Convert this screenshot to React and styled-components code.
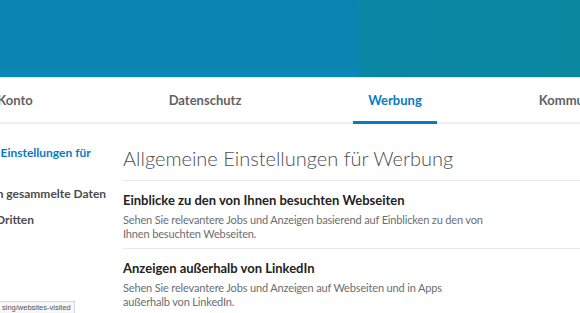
import React from "react"
import styled, { createGlobalStyle } from "styled-components"

const GlobalStyle = createGlobalStyle`
    html, body {
        margin: 0;
        padding: 0;
        background: #fff;
        overflow: hidden;
    }
    body {
        font-family: Lato, "Open Sans", sans-serif;
        width: 580px;
        height: 313px;
    }
`

const Page = styled.div`
    width: 580px;
    height: 313px;
    overflow: hidden;
    position: relative;
`
const Hero = styled.header`
    height: 77px;
    display: flex;
    background: #0a84b2;
    border-bottom: 1px solid #cfe6ee;
`
const HeroLeft = styled.div`
    flex: 0 0 358px;
    background: linear-gradient(180deg, #0a83b0 0%, #0a84b2 85%, #0c89bd 100%);
`
const HeroRight = styled.div`
    flex: 1;
    background: linear-gradient(90deg, #0a86a6 0%, #0a889f 100%);
`
const TabBar = styled.nav`
    display: flex;
    height: 44px;
    margin-left: -80px;
    border-bottom: 2px solid #f0f0f0;
`
const Tab = styled.div`
    flex: 0 0 190px;
    display: flex;
    justify-content: center;
`
const TabLabel = styled.span`
    display: flex;
    align-items: center;
    padding: 0 15px;
    font-size: 13px;
    font-weight: 700;
    color: ${p => (p.$active ? "#0a7bc1" : "#5f6263")};
    border-bottom: 3px solid ${p => (p.$active ? "#0a7bc1" : "transparent")};
    margin-bottom: -2px;
`
const Main = styled.div`
    display: flex;
    margin-left: -120px;
`
const Sidebar = styled.aside`
    flex: 0 0 243px;
    padding: 21px 0 0 58px;
    box-sizing: border-box;
    display: flex;
    flex-direction: column;
    gap: 11px;
`
const SideItem = styled.a`
    max-width: 180px;
    font-size: 12px;
    line-height: 15px;
    font-weight: 700;
    color: ${p => (p.$active ? "#0a7bc1" : "#4a4d4f")};
    text-decoration: none;
`
const Content = styled.section`
    flex: 1;
    padding-top: 20px;
`
const Title = styled.h1`
    margin: 0;
    font-size: 20px;
    line-height: 28px;
    font-weight: 300;
    color: #4b4f52;
    padding-bottom: 8px;
    border-bottom: 1px solid #e6e9ec;
    white-space: nowrap;
`
const Setting = styled.div`
    padding: 10px 0 7px;
    border-bottom: 1px solid ${p => (p.$last ? "transparent" : "#e6e9ec")};
`
const SettingTitle = styled.h2`
    margin: 0 0 4px;
    font-size: 13px;
    line-height: 18px;
    font-weight: 700;
    color: #222;
`
const SettingText = styled.p`
    margin: 0;
    font-size: 11px;
    line-height: 14px;
    letter-spacing: -0.15px;
    color: #6b6e70;
    max-width: ${p => p.$measure}px;
`
const StatusBar = styled.div`
    position: absolute;
    left: -1px;
    bottom: 0;
    height: 11px;
    padding: 0 3px 0 2px;
    background: #f7f7f7;
    border: 1px solid #d6d6d6;
    border-bottom: none;
    font-family: "Liberation Sans", Arial, sans-serif;
    font-size: 7.5px;
    line-height: 11px;
    color: #555;
`

const settings = [
    {
        title: "Einblicke zu den von Ihnen besuchten Webseiten",
        text: "Sehen Sie relevantere Jobs und Anzeigen basierend auf Einblicken zu den von Ihnen besuchten Webseiten.",
        measure: 372,
    },
    {
        title: "Anzeigen außerhalb von LinkedIn",
        text: "Sehen Sie relevantere Jobs und Anzeigen auf Webseiten und in Apps außerhalb von LinkedIn.",
        measure: 340,
    },
]

const App = () => {
    return (
        <Page>
            <GlobalStyle />
            <Hero>
                <HeroLeft />
                <HeroRight />
            </Hero>
            <TabBar>
                <Tab><TabLabel>Konto</TabLabel></Tab>
                <Tab><TabLabel>Datenschutz</TabLabel></Tab>
                <Tab><TabLabel $active>Werbung</TabLabel></Tab>
                <Tab><TabLabel>Kommunikation</TabLabel></Tab>
            </TabBar>
            <Main>
                <Sidebar>
                    <SideItem $active href="#">Allgemeine Einstellungen für Werbung</SideItem>
                    <SideItem href="#">Von Kunden gesammelte Daten</SideItem>
                    <SideItem href="#">Daten von Dritten</SideItem>
                </Sidebar>
                <Content>
                    <Title>Allgemeine Einstellungen für Werbung</Title>
                    {settings.map((s, i) => (
                        <Setting key={s.title} $last={i === settings.length - 1}>
                            <SettingTitle>{s.title}</SettingTitle>
                            <SettingText $measure={s.measure}>{s.text}</SettingText>
                        </Setting>
                    ))}
                </Content>
            </Main>
            <StatusBar>sing/websites-visited</StatusBar>
        </Page>
    )
}

export default App
